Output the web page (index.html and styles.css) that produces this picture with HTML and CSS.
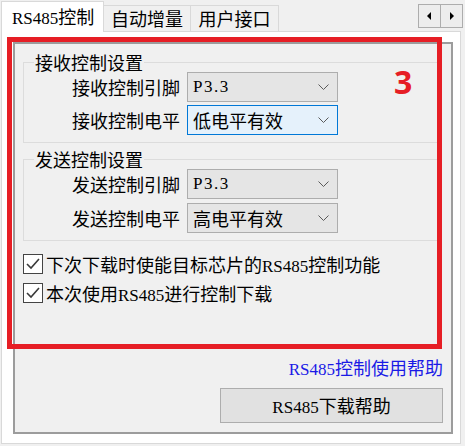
FILE: index.html
```html
<!DOCTYPE html>
<html lang="zh">
<head>
<meta charset="utf-8">
<title>RS485控制</title>
<link rel="stylesheet" href="styles.css">
</head>
<body>
<div class="window">
  <div class="tabstrip">
    <div class="tab active"><span class="lat">RS485</span>控制</div>
    <div class="tab t2">自动增量</div>
    <div class="tab t3">用户接口</div>
    <div class="scroller">
      <div class="sbtn"><svg width="5" height="8" viewBox="0 0 5 8"><path d="M4 0 L0 4 L4 8 Z" fill="#000"/></svg></div>
      <div class="sbtn"><svg width="5" height="8" viewBox="0 0 5 8"><path d="M1 0 L5 4 L1 8 Z" fill="#000"/></svg></div>
    </div>
  </div>
  <div class="page">
    <div class="panel">
      <fieldset class="group">
        <legend>接收控制设置</legend>
        <div class="row">
          <label class="lbl">接收控制引脚</label>
          <div class="combo"><span class="pin">P3.3</span><svg width="11" height="6" viewBox="0 0 11 6"><path d="M0.5 0.5 L5.5 5.5 L10.5 0.5" fill="none" stroke="#5a5a5a"/></svg></div>
        </div>
        <div class="row">
          <label class="lbl">接收控制电平</label>
          <div class="combo focus"><span>低电平有效</span><svg width="11" height="6" viewBox="0 0 11 6"><path d="M0.5 0.5 L5.5 5.5 L10.5 0.5" fill="none" stroke="#5a5a5a"/></svg></div>
        </div>
      </fieldset>
      <fieldset class="group g2">
        <legend>发送控制设置</legend>
        <div class="row">
          <label class="lbl">发送控制引脚</label>
          <div class="combo"><span class="pin">P3.3</span><svg width="11" height="6" viewBox="0 0 11 6"><path d="M0.5 0.5 L5.5 5.5 L10.5 0.5" fill="none" stroke="#5a5a5a"/></svg></div>
        </div>
        <div class="row">
          <label class="lbl">发送控制电平</label>
          <div class="combo"><span>高电平有效</span><svg width="11" height="6" viewBox="0 0 11 6"><path d="M0.5 0.5 L5.5 5.5 L10.5 0.5" fill="none" stroke="#5a5a5a"/></svg></div>
        </div>
      </fieldset>
      <div class="checks">
        <div class="check"><span class="box"><svg width="18" height="18" viewBox="0 0 18 18"><path d="M3 9 L7 13 L15 4" fill="none" stroke="#3a3a3a" stroke-width="1.6"/></svg></span><span>下次下载时使能目标芯片的<span class="lat">RS485</span>控制功能</span></div>
        <div class="check"><span class="box"><svg width="18" height="18" viewBox="0 0 18 18"><path d="M3 9 L7 13 L15 4" fill="none" stroke="#3a3a3a" stroke-width="1.6"/></svg></span><span>本次使用<span class="lat">RS485</span>进行控制下载</span></div>
      </div>
      <div class="bottom">
        <a class="link"><span class="lat">RS485</span>控制使用帮助</a>
        <div class="btn"><span class="lat">RS485</span>下载帮助</div>
      </div>
    </div>
  </div>
  <div class="annot"></div>
  <div class="annot-num">3</div>
</div>
</body>
</html>
```
FILE: styles.css
```css
html, body {
  margin: 0;
  padding: 0;
}
body {
  background: #f0f0f0;
  font-family: "Noto Sans CJK SC", "Noto Sans", sans-serif;
  font-size: 18px;
  color: #000;
}
.window {
  position: relative;
  width: 465px;
  height: 446px;
}
.lat {
  font-family: "Liberation Serif", serif;
  font-size: 17px;
}
.pin {
  font-family: "Liberation Serif", serif;
  font-size: 17px;
  letter-spacing: 1.5px;
}

/* tabs */
.tabstrip {
  display: flex;
  align-items: flex-end;
  height: 31px;
  padding-left: 1px;
}
.tab {
  box-sizing: border-box;
  height: 26px;
  border: 1px solid #d9d9d9;
  border-bottom: none;
  background: #f0f0f0;
  line-height: 24px;
  text-align: center;
  margin-left: -1px;
  white-space: nowrap;
}
.tab.active {
  position: relative;
  z-index: 1;
  width: 103px;
  height: 31px;
  margin-left: 0;
  margin-bottom: -1px;
  background: #fff;
  line-height: 28px;
  text-align: left;
  padding-left: 10px;
}
.t2 { width: 88px; }
.t3 { width: 89px; }
.scroller {
  display: flex;
  align-self: flex-start;
  margin: 4px 2px 0 auto;
}
.sbtn {
  box-sizing: border-box;
  width: 23px;
  height: 24px;
  border: 1px solid #adadad;
  background: #ededed;
  display: flex;
  align-items: center;
  justify-content: center;
}
.sbtn + .sbtn { margin-left: -1px; }

/* page */
.page {
  box-sizing: border-box;
  width: 460px;
  height: 413px;
  margin-left: 1px;
  border: 1px solid #d9d9d9;
  background: #fff;
  padding: 10px 7px 9px 11px;
}
.panel {
  box-sizing: border-box;
  width: 440px;
  height: 392px;
  border: 2px solid #9c9c9c;
  background: #f0f0f0;
  display: flex;
  flex-direction: column;
}
.group {
  margin: 8px 9px 0 8px;
  padding: 0 0 7px 10px;
  border: 1px solid #dcdcdc;
  min-width: 0;
}
.group legend {
  padding: 0 1px;
  line-height: 20px;
}
.g2 { margin-top: 6px; }
.g2 .row + .row { margin-top: 4px; }
.row {
  display: grid;
  grid-template-columns: 146px 151px;
  column-gap: 7px;
  align-items: center;
}
.row + .row { margin-top: 3px; }
.lbl {
  text-align: right;
  line-height: 30px;
  white-space: nowrap;
}
.combo {
  box-sizing: border-box;
  height: 30px;
  border: 1px solid #adadad;
  background: #e5e5e5;
  padding: 0 8px 0 5px;
  line-height: 28px;
  display: flex;
  align-items: center;
  justify-content: space-between;
}
.combo.focus {
  border-color: #0078d7;
  background: #e5f1fb;
}

/* checkboxes */
.checks {
  margin-top: 8px;
  padding-left: 8px;
}
.check {
  display: flex;
  align-items: center;
  height: 29px;
  white-space: nowrap;
}
.box {
  box-sizing: border-box;
  width: 20px;
  height: 20px;
  border: 1px solid #444;
  background: #fff;
  margin-right: 3px;
  display: flex;
  align-items: center;
  justify-content: center;
}

/* bottom */
.bottom {
  margin-top: auto;
  margin-bottom: 9px;
  padding-right: 8px;
  display: flex;
  flex-direction: column;
  align-items: flex-end;
}
.link {
  color: #1a1ae6;
  line-height: 20px;
}
.btn {
  box-sizing: border-box;
  margin-top: 8px;
  width: 223px;
  height: 35px;
  border: 1px solid #adadad;
  background: #e1e1e1;
  text-align: center;
  line-height: 33px;
}

/* annotation overlay */
.annot {
  position: absolute;
  left: 7px;
  top: 37px;
  width: 435px;
  height: 312px;
  box-sizing: border-box;
  border: 5px solid #e61e25;
}
.annot-num {
  position: absolute;
  left: 394px;
  top: 66px;
  font-family: "Noto Sans", sans-serif;
  font-weight: 700;
  font-size: 32px;
  line-height: 32px;
  color: #e61e25;
}
```
